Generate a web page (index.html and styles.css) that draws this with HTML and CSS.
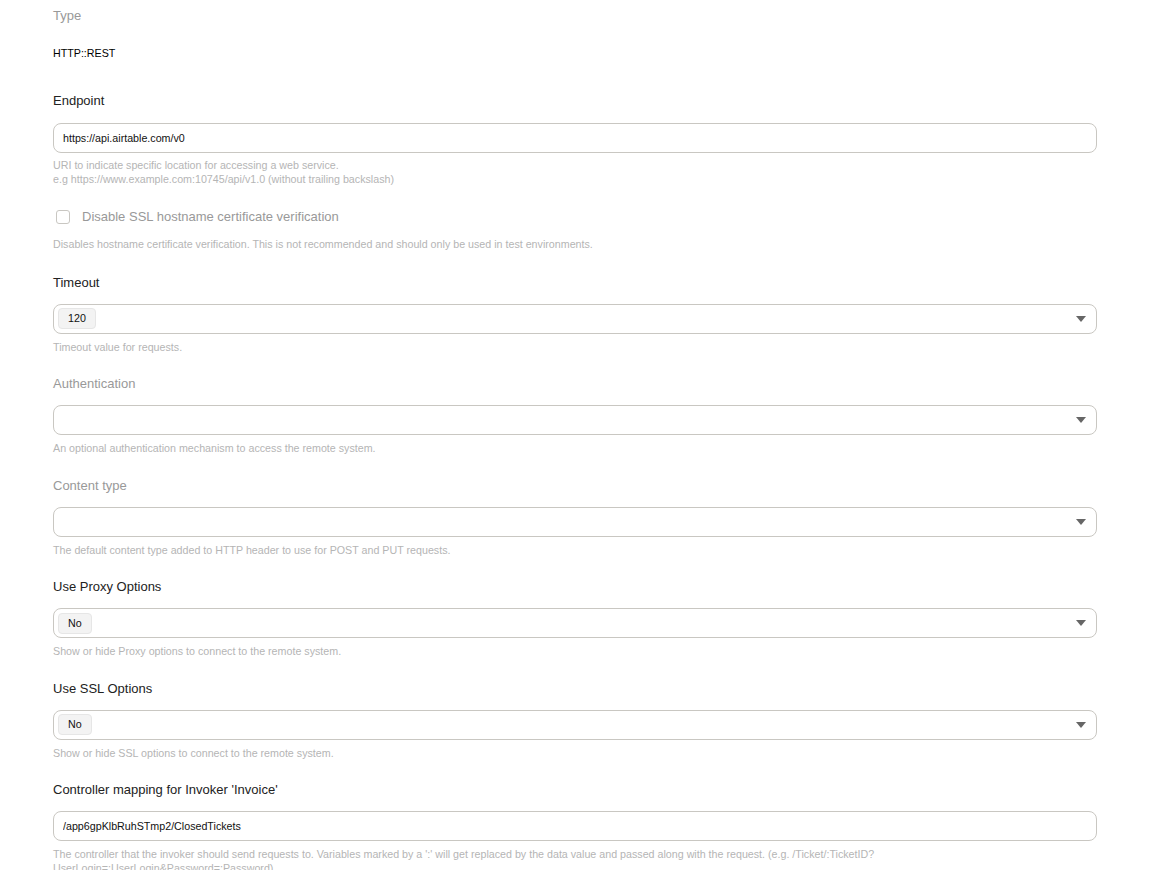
FILE: index.html
```html
<!DOCTYPE html>
<html lang="en">

<head>
  <meta charset="UTF-8">
  <meta name="viewport" content="width=device-width, initial-scale=1.0">
  <title>Connection settings</title>
  <link rel="stylesheet" href="styles.css">
</head>

<body>
  <form class="settings">
    <div class="field field-type">
      <div class="label muted">Type</div>
      <div class="static-value">HTTP::REST</div>
    </div>

    <div class="field field-text">
      <label class="label" for="endpoint">Endpoint</label>
      <input class="control" type="text" id="endpoint" value="https://api.airtable.com/v0">
      <p class="help">URI to indicate specific location for accessing a web service.<br>e.g https://www.example.com:10745/api/v1.0 (without trailing backslash)</p>
    </div>

    <div class="field field-check">
      <label class="check-row">
        <span class="checkbox"></span>
        <span class="check-label">Disable SSL hostname certificate verification</span>
      </label>
      <p class="help">Disables hostname certificate verification. This is not recommended and should only be used in test environments.</p>
    </div>

    <div class="field">
      <div class="label">Timeout</div>
      <div class="control select">
        <span class="chip">120</span>
        <span class="caret"></span>
      </div>
      <p class="help">Timeout value for requests.</p>
    </div>

    <div class="field">
      <div class="label muted">Authentication</div>
      <div class="control select">
        <span class="caret"></span>
      </div>
      <p class="help">An optional authentication mechanism to access the remote system.</p>
    </div>

    <div class="field">
      <div class="label muted">Content type</div>
      <div class="control select">
        <span class="caret"></span>
      </div>
      <p class="help">The default content type added to HTTP header to use for POST and PUT requests.</p>
    </div>

    <div class="field">
      <div class="label">Use Proxy Options</div>
      <div class="control select">
        <span class="chip">No</span>
        <span class="caret"></span>
      </div>
      <p class="help">Show or hide Proxy options to connect to the remote system.</p>
    </div>

    <div class="field">
      <div class="label">Use SSL Options</div>
      <div class="control select">
        <span class="chip">No</span>
        <span class="caret"></span>
      </div>
      <p class="help">Show or hide SSL options to connect to the remote system.</p>
    </div>

    <div class="field">
      <label class="label" for="mapping">Controller mapping for Invoker 'Invoice'</label>
      <input class="control" type="text" id="mapping" value="/app6gpKlbRuhSTmp2/ClosedTickets">
      <p class="help">The controller that the invoker should send requests to. Variables marked by a ':' will get replaced by the data value and passed along with the request. (e.g. /Ticket/:TicketID?UserLogin=:UserLogin&amp;Password=:Password)</p>
    </div>
  </form>
</body>

</html>
```

FILE: styles.css
```css
* {
  margin: 0;
  padding: 0;
  box-sizing: border-box;
}

body {
  font-family: "Liberation Sans", Arial, sans-serif;
  background: #fff;
  color: #222;
  overflow: hidden;
}

.settings {
  width: 1044px;
  margin-left: 53px;
  padding-top: 7px;
}

.field {
  display: flex;
  flex-direction: column;
  padding-bottom: 21.5px;
}

.label {
  display: block;
  font-size: 13px;
  line-height: 18px;
  color: #222;
  margin-bottom: 12px;
}

.label.muted {
  color: #999;
}

.field-type {
  padding-bottom: 0;
}

.field-type .label {
  margin-bottom: 0;
}

.static-value {
  font-size: 10.7px;
  line-height: 14px;
  color: #000;
  margin-top: 21px;
  margin-bottom: 32px;
}

.field-text .label {
  margin-bottom: 13px;
}

.field-text .help {
  margin-top: 5px;
}

.field-text {
  padding-bottom: 20.5px;
}

.control {
  height: 30px;
  width: 100%;
  border: 1px solid #c9c7c2;
  border-radius: 8px;
  background: #fff;
  font-family: inherit;
  font-size: 10.7px;
  color: #111;
  padding: 0 9px;
  outline: none;
}

.select {
  display: flex;
  align-items: center;
  padding: 0 10px 0 4px;
}

.chip {
  display: inline-block;
  height: 21px;
  line-height: 19px;
  padding: 0 9px;
  border: 1px solid #e6e6e6;
  border-radius: 4px;
  background: #f3f3f3;
  font-size: 10.7px;
  color: #111;
}

.caret {
  margin-left: auto;
  width: 0;
  height: 0;
  border-left: 5px solid transparent;
  border-right: 5px solid transparent;
  border-top: 6px solid #666;
}

.help {
  max-width: 1030px;
  font-size: 10.7px;
  line-height: 14px;
  color: #b5b5b5;
  margin-top: 6px;
}

.field-check {
  padding-top: 1px;
  padding-bottom: 23px;
}

.check-row {
  display: flex;
  align-items: center;
  gap: 12px;
  padding-left: 3px;
  height: 18px;
}

.checkbox {
  width: 14px;
  height: 14px;
  border: 1px solid #c9c7c2;
  border-radius: 3px;
  background: #fff;
}

.check-label {
  font-size: 13px;
  color: #999;
}

.field-check .help {
  margin-top: 11px;
}
```
